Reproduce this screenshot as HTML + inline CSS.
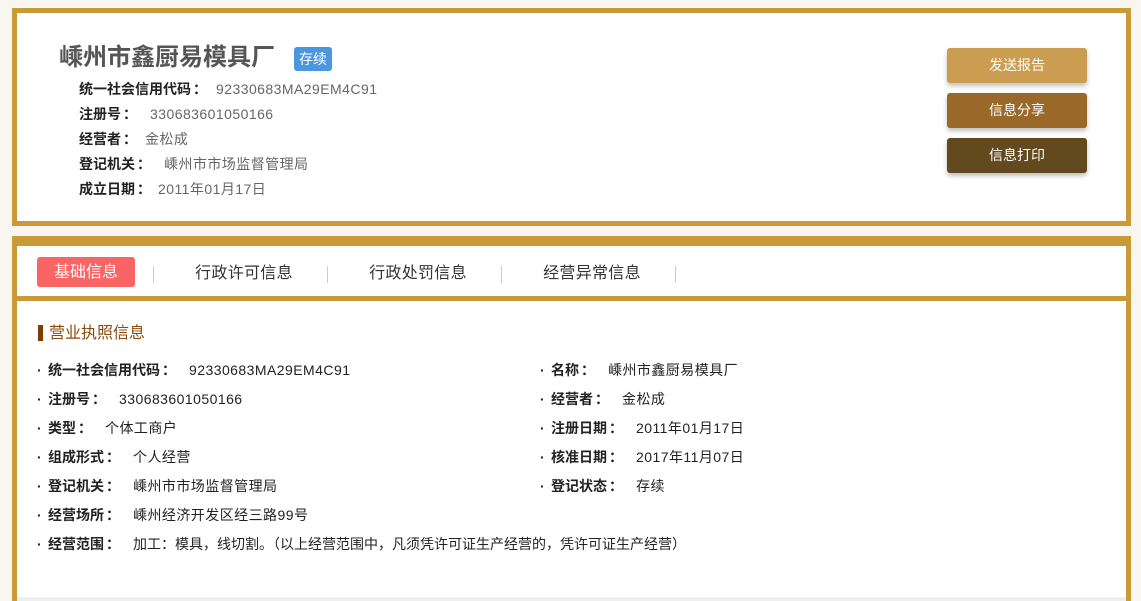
<!DOCTYPE html>
<html><head><meta charset="utf-8">
<style>
*{margin:0;padding:0;box-sizing:border-box}
html{width:1141px;height:601px;overflow:hidden}
body{width:1141px;height:601px;overflow:hidden;background:#f9f6ef;font-family:"Liberation Sans","Noto Sans CJK SC",sans-serif;position:relative}
.card{position:absolute;background:#fff;border:5px solid #c99a38}
.a{position:absolute;white-space:nowrap;line-height:20px}
.t{font-size:24px;font-weight:bold;color:#555;line-height:30px}
.lab{font-size:14px;font-weight:bold;color:#222}
.c{display:inline-block;width:16px;text-align:center;margin-left:1px}
.v1{font-size:14px;color:#666;margin-left:10px;font-weight:normal;letter-spacing:.45px}
.v2{font-size:14px;color:#222;margin-left:12px;font-weight:normal;letter-spacing:.45px}
.btn{position:absolute;left:947px;width:140px;height:35px;border-radius:3px;color:#fff;font-size:14px;line-height:35px;text-align:center;box-shadow:0 3px 5px rgba(0,0,0,.25)}
.sep{position:absolute;top:266px;width:1px;height:17px;background:#ccc}
.tab{position:absolute;top:263px;font-size:16px;color:#333;line-height:22px;width:174px;text-align:center;letter-spacing:.3px}
.row{position:absolute;font-size:14px;line-height:20px;white-space:nowrap}
.row b{color:#222}
.d{display:inline-block;width:11px}
</style></head><body>
<div class="card" style="left:12px;top:8px;width:1119px;height:218px"></div>
<div class="a t" style="left:59px;top:43px">嵊州市鑫厨易模具厂</div>
<div class="a" style="left:294px;top:47px;width:38px;height:24px;background:#4a97e0;color:#fff;border-radius:3px;font-size:14px;line-height:24px;text-align:center">存续</div>
<div class="a lab" style="left:79px;top:79px">统一社会信用代码<span class="c">：</span><span class="v1" style="margin-left:8px">92330683MA29EM4C91</span></div>
<div class="a lab" style="left:79px;top:104px">注册号<span class="c">：</span><span class="v1" style="margin-left:12px">330683601050166</span></div>
<div class="a lab" style="left:79px;top:129px">经营者<span class="c">：</span><span class="v1" style="margin-left:7px">金松成</span></div>
<div class="a lab" style="left:79px;top:154px">登记机关<span class="c">：</span><span class="v1" style="margin-left:12px">嵊州市市场监督管理局</span></div>
<div class="a lab" style="left:79px;top:179px">成立日期<span class="c">：</span><span class="v1" style="margin-left:6px">2011年01月17日</span></div>
<div class="btn" style="top:48px;background:#cb9d50">发送报告</div>
<div class="btn" style="top:93px;background:#9a6828">信息分享</div>
<div class="btn" style="top:138px;background:#624a1e">信息打印</div>

<div class="card" style="left:12px;top:236px;width:1119px;height:380px;border-top-width:10px;border-bottom:none"></div>
<div class="a" style="left:17px;top:296px;width:1109px;height:5px;background:#c99a38"></div>
<div class="a" style="left:17px;top:597px;width:1109px;height:4px;background:#eee"></div>
<div class="a" style="left:37px;top:257px;width:98px;height:30px;background:#f96464;border-radius:3px;color:#fff;font-size:16px;line-height:31px;text-align:center">基础信息</div>
<div class="sep" style="left:153px"></div><div class="sep" style="left:327px"></div><div class="sep" style="left:501px"></div><div class="sep" style="left:675px"></div>
<div class="tab" style="left:157px">行政许可信息</div>
<div class="tab" style="left:331px">行政处罚信息</div>
<div class="tab" style="left:505px">经营异常信息</div>

<div class="a" style="left:38px;top:325px;width:5px;height:16px;background:#7a3f00"></div>
<div class="a" style="left:49px;top:323px;font-size:16px;color:#8a4a0a;line-height:22px">营业执照信息</div>

<div class="row" style="left:37px;top:360px"><b><span class="d">·</span>统一社会信用代码<span class="c">：</span></b><span class="v2">92330683MA29EM4C91</span></div>
<div class="row" style="left:37px;top:389px"><b><span class="d">·</span>注册号<span class="c">：</span></b><span class="v2">330683601050166</span></div>
<div class="row" style="left:37px;top:418px"><b><span class="d">·</span>类型<span class="c">：</span></b><span class="v2">个体工商户</span></div>
<div class="row" style="left:37px;top:447px"><b><span class="d">·</span>组成形式<span class="c">：</span></b><span class="v2">个人经营</span></div>
<div class="row" style="left:37px;top:476px"><b><span class="d">·</span>登记机关<span class="c">：</span></b><span class="v2">嵊州市市场监督管理局</span></div>
<div class="row" style="left:37px;top:505px"><b><span class="d">·</span>经营场所<span class="c">：</span></b><span class="v2">嵊州经济开发区经三路99号</span></div>
<div class="row" style="left:37px;top:534px"><b><span class="d">·</span>经营范围<span class="c">：</span></b><span class="v2" style="letter-spacing:0">加工：模具，线切割。（以上经营范围中，凡须凭许可证生产经营的，凭许可证生产经营）</span></div>

<div class="row" style="left:540px;top:360px"><b><span class="d">·</span>名称<span class="c">：</span></b><span class="v2">嵊州市鑫厨易模具厂</span></div>
<div class="row" style="left:540px;top:389px"><b><span class="d">·</span>经营者<span class="c">：</span></b><span class="v2">金松成</span></div>
<div class="row" style="left:540px;top:418px"><b><span class="d">·</span>注册日期<span class="c">：</span></b><span class="v2">2011年01月17日</span></div>
<div class="row" style="left:540px;top:447px"><b><span class="d">·</span>核准日期<span class="c">：</span></b><span class="v2">2017年11月07日</span></div>
<div class="row" style="left:540px;top:476px"><b><span class="d">·</span>登记状态<span class="c">：</span></b><span class="v2">存续</span></div>
</body></html>
